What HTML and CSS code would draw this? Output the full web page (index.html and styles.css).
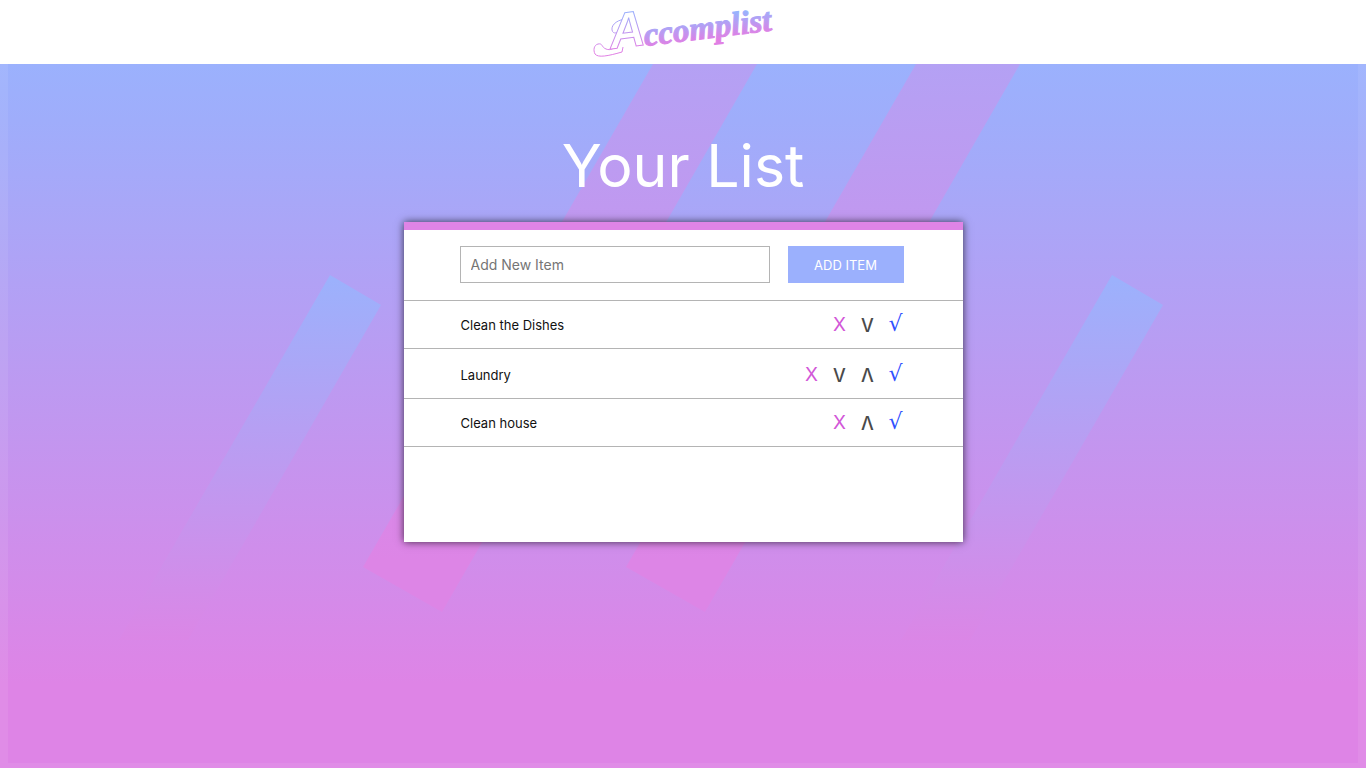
FILE: index.html
```html
<!DOCTYPE html>
<html lang="en">
<head>
<meta charset="utf-8">
<title>Accomplist</title>
<link rel="stylesheet" href="styles.css">
</head>
<body>
<header class="header">
  <a class="brand" href="#" aria-label="Accomplist">
    <svg class="logo" width="200" height="64" viewBox="0 0 200 64">
      <defs>
        <linearGradient id="ink" gradientUnits="userSpaceOnUse" x1="0" y1="10" x2="0" y2="52">
          <stop offset="0" stop-color="#93b6ff"/>
          <stop offset="1" stop-color="#e07fe4"/>
        </linearGradient>
        <linearGradient id="ink-word" gradientUnits="userSpaceOnUse" x1="60" y1="22" x2="60" y2="48">
          <stop offset="0" stop-color="#93b6ff"/>
          <stop offset="1" stop-color="#e07fe4"/>
        </linearGradient>
      </defs>
      <path class="flourish" stroke="url(#ink)" d="M34 43C32 48 28 51 23 49C18 47 20 43 15 44C11 45 10 50 12 54C15 58 25 56 39 52L40 47"/>
      <path class="flourish" stroke="url(#ink)" d="M44 19C36 19 28 24 29 30C30 35 36 33 36 29C36 27 38 25 41 25"/>
      <text class="logo-initial" stroke="url(#ink)" transform="rotate(-7 28 49)" x="28" y="49">A</text>
      <text class="logo-word" fill="url(#ink-word)" stroke="url(#ink-word)" transform="rotate(-7 62 46)" x="62" y="46">ccomplist</text>
    </svg>
  </a>
</header>
<main class="main">
  <svg class="backdrop" viewBox="0 64 1366 704" preserveAspectRatio="xMidYMin slice" aria-hidden="true">
    <defs>
      <linearGradient id="pink" gradientUnits="userSpaceOnUse" x1="0" y1="64" x2="0" y2="560">
        <stop offset="0" stop-color="#b4a1f4"/>
        <stop offset="1" stop-color="#dd85e6"/>
      </linearGradient>
      <linearGradient id="blue" gradientUnits="userSpaceOnUse" x1="0" y1="280" x2="0" y2="640">
        <stop offset="0" stop-color="#9cb1fc"/>
        <stop offset="1" stop-color="#db86e6"/>
      </linearGradient>
    </defs>
    <g fill="url(#pink)">
      <path d="M653 64H757L442 612L363 567Z"/>
      <path d="M916 64H1020L705 612L626 567Z"/>
    </g>
    <g fill="url(#blue)">
      <path d="M330 275L381 305L188 640H119Z"/>
      <path d="M1112 275L1163 305L970 640H901Z"/>
    </g>
  </svg>
  <h1 class="title">Your List</h1>
  <section class="card">
    <form class="add">
      <input class="add-input" type="text" placeholder="Add New Item" aria-label="Add New Item">
      <button class="add-button" type="button">ADD ITEM</button>
    </form>
    <ul class="list">
      <li class="item">
        <span class="item-name">Clean the Dishes</span>
        <button class="act remove" type="button" aria-label="Delete">X</button>
        <button class="act move" type="button" aria-label="Move down">V</button>
        <button class="act done" type="button" aria-label="Complete">√</button>
      </li>
      <li class="item item-middle">
        <span class="item-name">Laundry</span>
        <button class="act remove" type="button" aria-label="Delete">X</button>
        <button class="act move" type="button" aria-label="Move down">V</button>
        <button class="act move" type="button" aria-label="Move up">Λ</button>
        <button class="act done" type="button" aria-label="Complete">√</button>
      </li>
      <li class="item">
        <span class="item-name">Clean house</span>
        <button class="act remove" type="button" aria-label="Delete">X</button>
        <button class="act move" type="button" aria-label="Move up">Λ</button>
        <button class="act done" type="button" aria-label="Complete">√</button>
      </li>
    </ul>
  </section>
</main>
</body>
</html>
```
FILE: styles.css
```css
* {
  box-sizing: border-box;
}

body {
  margin: 0;
  min-height: 100vh;
  display: flex;
  flex-direction: column;
  font-family: Inter, "Liberation Sans", sans-serif;
  color: #111;
}

.header {
  display: flex;
  justify-content: center;
  background: #fff;
}

.brand,
.logo {
  display: block;
  overflow: visible;
}

.flourish {
  fill: none;
  stroke-width: 1;
}

.logo-initial,
.logo-word {
  font-style: italic;
  font-weight: 700;
}

.logo-initial {
  font-family: "Liberation Sans", sans-serif;
  font-size: 50px;
  fill: #fff;
  stroke-width: 1;
}

.logo-word {
  font-family: "Liberation Serif", serif;
  font-size: 33px;
  stroke-width: 1;
}

.main {
  position: relative;
  flex: 1;
  display: flex;
  flex-direction: column;
  align-items: center;
  padding: 64px 16px;
  background: linear-gradient(#9bb1fd, #9fadfb 8%, #de84e6 88%);
  overflow: hidden;
}

.backdrop {
  position: absolute;
  inset: 0;
  width: 100%;
  height: 100%;
}

.main::after {
  content: "";
  position: absolute;
  inset: 0;
  border: solid rgba(255, 255, 255, 0.07);
  border-width: 0 8px 5px;
  pointer-events: none;
}

.title {
  position: relative;
  margin: 0 0 18px;
  font-size: 59px;
  line-height: 76px;
  font-weight: 400;
  color: #fff;
}

.card {
  position: relative;
  width: 100%;
  max-width: 559px;
  min-height: 320px;
  background: #fff;
  border-top: 8px solid #df84e6;
  box-shadow: 0 0 8px rgba(0, 0, 0, 0.7);
}

.add {
  display: flex;
  gap: 18px;
  padding: 16px 59px 17px 56px;
  border-bottom: 1px solid #b4b4b4;
}

.add-input {
  flex: 1;
  min-width: 0;
  height: 37px;
  padding: 0 10px;
  border: 1px solid #b4b4b4;
  font: 14px Inter, sans-serif;
}

.add-input::placeholder {
  color: #757575;
}

.add-button {
  width: 116px;
  padding: 0;
  border: 0;
  background: #9bb0fd;
  color: #fff;
  font: 13px Inter, sans-serif;
}

.list {
  margin: 0;
  padding: 0;
  list-style: none;
}

.item {
  display: flex;
  align-items: center;
  gap: 8px;
  min-height: 48px;
  padding: 1px 57px 0;
  border-bottom: 1px solid #b4b4b4;
}

.item-middle {
  min-height: 50px;
  padding-top: 3px;
}

.item-name {
  flex: 1;
  font-size: 13px;
}

.act {
  width: 20px;
  padding: 0;
  border: 0;
  background: none;
  font: 19px/24px Inter, sans-serif;
}

.remove {
  color: #d257d8;
}

.move {
  padding-top: 1px;
  color: #4a4a4a;
  font-size: 18px;
  font-weight: 500;
}

.done {
  padding-bottom: 3px;
  color: #2f50ff;
  font-family: "DejaVu Sans", sans-serif;
  font-size: 22px;
}
```
